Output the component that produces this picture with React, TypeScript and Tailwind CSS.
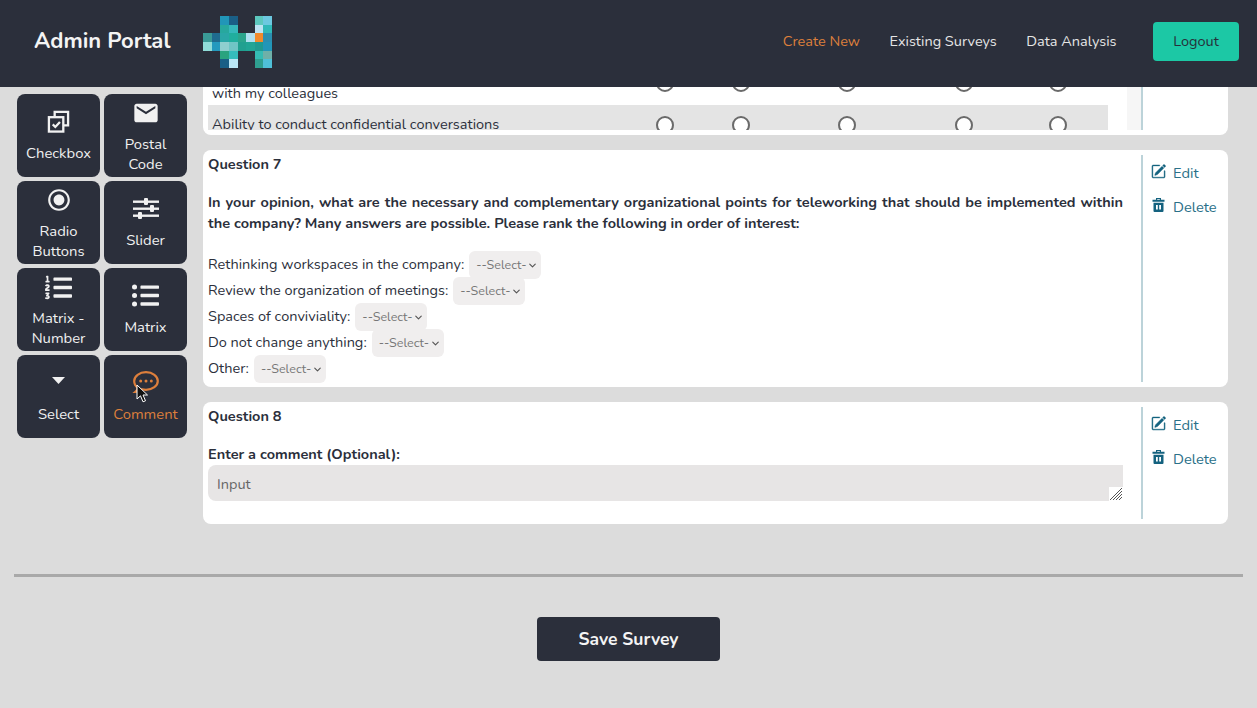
import { MdEmail, MdRadioButtonChecked } from "react-icons/md";
import { BsPencilSquare } from "react-icons/bs";
import { FaListOl, FaListUl } from "react-icons/fa";
import { ChevronDown } from "lucide-react";

const LOGO = [
  [null, null, "#2196b8", "#1a5f86", null, null, "#5cc7bd", "#6cc8e0"],
  [null, null, "#27a89e", "#35b8bb", null, null, "#bde3f3", "#2fb8b8"],
  ["#3a9a96", "#1f6b8e", "#2aa7a7", "#20ae9e", "#2aa58c", "#aee0f0", "#f08a2c", "#2a8fb0"],
  ["#90dcd8", "#2499bd", "#8fcfcf", "#6fc5c5", "#20a090", "#20a595", "#1f9a90", "#2296b8"],
  [null, null, "#2aa37f", "#35bcbc", null, null, "#35bcb4", "#6fb0a8"],
  [null, null, "#1a5f86", "#bbe6f5", null, null, "#2f9f90", "#4fc0d8"],
];

function Logo() {
  return (
    <svg width="69" height="52" viewBox="0 0 8 6" shapeRendering="crispEdges">
      {LOGO.map((row, y) =>
        row.map((c, x) => c && <rect key={`${x}-${y}`} x={x} y={y} width="1" height="1" fill={c} />)
      )}
    </svg>
  );
}

function CheckboxIcon() {
  return (
    <svg width="23" height="23" viewBox="0 0 24 24" fill="none" stroke="currentColor" strokeWidth="2.4">
      <path d="M8 7V2h14v14h-5" />
      <rect x="2" y="7.5" width="15" height="15" />
      <path d="M6 15l2.7 2.7L13.5 12.5" />
    </svg>
  );
}

function SliderIcon() {
  return (
    <svg width="26" height="21" viewBox="0 0 26 21" fill="currentColor">
      <rect y="2.5" width="26" height="2.4" />
      <rect y="9.5" width="26" height="2.4" />
      <rect y="16.5" width="26" height="2.4" />
      <rect x="11" width="4" height="7" rx="1" />
      <rect x="17" y="7" width="4" height="7" rx="1" />
      <rect x="5" y="14" width="4" height="7" rx="1" />
    </svg>
  );
}

function CaretIcon() {
  return (
    <svg width="13" height="7" viewBox="0 0 13 7" fill="currentColor" className="mb-1">
      <path d="M0 0h13L6.500 7z" />
    </svg>
  );
}

function CommentIcon() {
  return (
    <svg width="27" height="22" viewBox="0 0 27 22" fill="none" stroke="currentColor" strokeWidth="2.2">
      <path d="M14 1.200c6.600 0 11.800 3.900 11.800 8.800S20.600 18.800 14 18.800c-1.400 0-2.800-.2-4-.5-1.300 1-3.500 2.300-6.600 2.500 1.400-1.200 2.200-2.800 2.300-4.300C3.500 15 2.200 12.700 2.200 10 2.200 5.100 7.400 1.200 14 1.200z" />
      <g fill="currentColor" stroke="none">
        <circle cx="8.700" cy="10" r="1.500" />
        <circle cx="14" cy="10" r="1.500" />
        <circle cx="19.300" cy="10" r="1.500" />
      </g>
    </svg>
  );
}

function TrashIcon() {
  return (
    <svg width="13" height="14" viewBox="0 0 13 14" className="text-[#14627f]" fill="currentColor">
      <path
        fillRule="evenodd"
        d="M4 0h5v1.800h3.500v2H.5v-2H4zm1.200 1v.8h2.600V1zM1.500 4.800h10V13a1 1 0 0 1-1 1h-8a1 1 0 0 1-1-1zM4 7v4.500h1.800V7zm3.200 0v4.500H9V7z"
      />
    </svg>
  );
}

function Cursor() {
  return (
    <svg width="13" height="19" viewBox="0 0 13 19" className="absolute left-[32px] top-[29px]">
      <path d="M1 1v14l3.500-3.200 2.500 6 2.500-1-2.500-5.800H11.500z" fill="#111" stroke="#fff" strokeWidth="1" />
    </svg>
  );
}

const TOOLS = [
  { label: ["Checkbox"], icon: <CheckboxIcon /> },
  { label: ["Postal", "Code"], icon: <MdEmail size={28} /> },
  { label: ["Radio", "Buttons"], icon: <MdRadioButtonChecked size={26} /> },
  { label: ["Slider"], icon: <SliderIcon /> },
  { label: ["Matrix -", "Number"], icon: <FaListOl size={27} /> },
  { label: ["Matrix"], icon: <FaListUl size={27} /> },
  { label: ["Select"], icon: <CaretIcon /> },
  { label: ["Comment"], icon: <CommentIcon />, active: true },
];

function Tool({ label, icon, active }: { label: string[]; icon: React.ReactNode; active?: boolean }) {
  const single = label.length === 1;
  return (
    <button
      className={`relative flex h-[82.5px] w-[83px] flex-col items-center rounded-lg bg-[#2b2f3b] text-[14.8px] leading-[20px] ${
        single ? "pt-[13px]" : "pt-[5px]"
      } ${active ? "text-[#dd7f3c]" : "text-[#f1f1f1]"}`}
    >
      <span className={`flex h-[28px] items-center ${single ? "mb-[8px]" : "mb-[7px]"}`}>{icon}</span>
      {label.map((l) => (
        <span key={l}>{l}</span>
      ))}
      {active && <Cursor />}
    </button>
  );
}

function Actions() {
  return (
    <div className="w-[81px] shrink-0 border-l-2 border-[#bcd3d9] pl-[8px] text-[14.7px] text-[#2a7088]">
      <div className="mt-2 flex items-center gap-[7px] leading-[20px]">
        <BsPencilSquare size={15} stroke="currentColor" strokeWidth={0.4} className="mb-1 text-[#14627f]" />
        <span>Edit</span>
      </div>
      <div className="mt-3.5 flex items-center gap-[8px] leading-[20px]">
        <span className="mb-1 ml-[1px]">
          <TrashIcon />
        </span>
        <span>Delete</span>
      </div>
    </div>
  );
}

function Radios() {
  return (
    <>
      {[457, 533, 639, 756, 850].map((x, i) => (
        <span
          key={i}
          style={{ left: x - 9 }}
          className="absolute top-1/2 h-[18px] w-[18px] -translate-y-1/2 rounded-full border-[2.5px] border-[#6a6a6a] bg-white"
        />
      ))}
    </>
  );
}

function SelectRow({ label }: { label: string }) {
  return (
    <div className="flex h-[26px] items-center gap-[5px]">
      <span>{label}:</span>
      <span className="relative">
        <select className="block h-[28px] w-[72px] appearance-none rounded-md bg-[#f0eeee] pl-[7px] text-[12.5px] text-[#777] outline-none">
          <option>--Select-</option>
        </select>
        <ChevronDown size={11} strokeWidth={2.5} className="pointer-events-none absolute right-[3px] top-[9px] text-[#555]" />
      </span>
    </div>
  );
}

export default function App() {
  return (
    <div className="flex h-[708px] flex-col overflow-hidden bg-[#dcdcdc] font-['Nunito','Noto_Sans',sans-serif] text-[14.5px] text-[#2b2f3b]">
      <header className="relative z-10 flex h-[87px] shrink-0 items-center bg-[#2b2f3b] pb-[4px] pl-[34px] pr-[18px]">
        <h1 className="mr-[34px] w-[135px] whitespace-nowrap text-[22px] font-bold text-[#f4f4f4]">Admin Portal</h1>
        <Logo />
        <nav className="ml-auto flex items-center gap-[29.500px] text-[14.500px] text-[#e6e6e6]">
          <a className="text-[#dd7f3c]">Create New</a>
          <a>Existing Surveys</a>
          <a>Data Analysis</a>
          <button className="ml-[7px] h-[39px] w-[86px] rounded bg-[#1cc8a5] text-[#26303a]">Logout</button>
        </nav>
      </header>

      <div className="flex min-h-0 flex-1 flex-col">
        <div className="flex h-[487px] shrink-0">
          <aside className="ml-[17px] mt-[7px] grid h-fit w-[170px] grid-cols-[83px_83px] gap-x-1 gap-y-[4.5px]">
            {TOOLS.map((t) => (
              <Tool key={t.label[0]} {...t} />
            ))}
          </aside>

          <main className="ml-4 flex w-[1025px] flex-col gap-[15px]">
            <section className="flex h-[48px] rounded-b-lg bg-white pb-[5px] pl-[5px]">
              <div className="relative w-[915px] overflow-hidden">
                <div className="-mt-[27px]">
                  <div className="relative flex h-[45px] items-end pb-[1px] pl-1 leading-[21px]">
                    with my colleagues
                    <Radios />
                  </div>
                  <div className="relative flex h-[39px] w-[900px] items-center bg-[#e4e4e4] pl-1">
                    Ability to conduct confidential conversations
                    <Radios />
                  </div>
                </div>
              </div>
              <div className="ml-1 w-[14px] shrink-0 bg-[#f6f6f6]" />
              <div className="w-[81px] shrink-0 border-l-2 border-[#bcd3d9]" />
            </section>

            <section className="flex h-[237px] rounded-lg bg-white py-[5px] pl-[5px]">
              <div className="mr-[18px] w-[915px]">
                <h2 className="font-bold leading-[19px]">Question 7</h2>
                <p className="mt-[18px] text-justify font-bold leading-[21px]">
                  In your opinion, what are the necessary and complementary organizational points for teleworking that
                  should be implemented within the company? Many answers are possible. Please rank the following in
                  order of interest:
                </p>
                <div className="mt-[18px]">
                  <SelectRow label="Rethinking workspaces in the company" />
                  <SelectRow label="Review the organization of meetings" />
                  <SelectRow label="Spaces of conviviality" />
                  <SelectRow label="Do not change anything" />
                  <SelectRow label="Other" />
                </div>
              </div>
              <Actions />
            </section>

            <section className="flex h-[122px] rounded-lg bg-white py-[5px] pl-[5px]">
              <div className="mr-[18px] w-[915px]">
                <h2 className="font-bold leading-[19px]">Question 8</h2>
                <label className="mt-[18px] block font-bold leading-[21px]">Enter a comment (Optional):</label>
                <div className="relative">
                  <textarea
                    placeholder="Input"
                    className="block h-[36px] w-[915px] resize-none overflow-y-scroll rounded-l-lg bg-[#e7e5e5] px-[9px] py-[9px] leading-[21px] outline-none placeholder:text-[#666] [&::-webkit-scrollbar]:w-[14px] [&::-webkit-scrollbar-track]:bg-[#f6f6f6]"
                  />
                  <span className="absolute bottom-0 right-0 h-[14px] w-[14px] bg-white">
                    <svg width="14" height="14" viewBox="0 0 14 14" stroke="#555" strokeWidth="1">
                      <path d="M1 13L13 1M4 13L13 4M7 13L13 7M10 13L13 10" />
                    </svg>
                  </span>
                </div>
              </div>
              <Actions />
            </section>
          </main>
        </div>

        <hr className="mx-[14px] border-t-[3px] border-[#a9a9a9]" />

        <button className="mx-auto mt-[40px] h-[44px] w-[183px] rounded bg-[#2b2f3b] text-[17.500px] font-bold text-[#f4f4f4]">
          Save Survey
        </button>
      </div>
    </div>
  );
}
